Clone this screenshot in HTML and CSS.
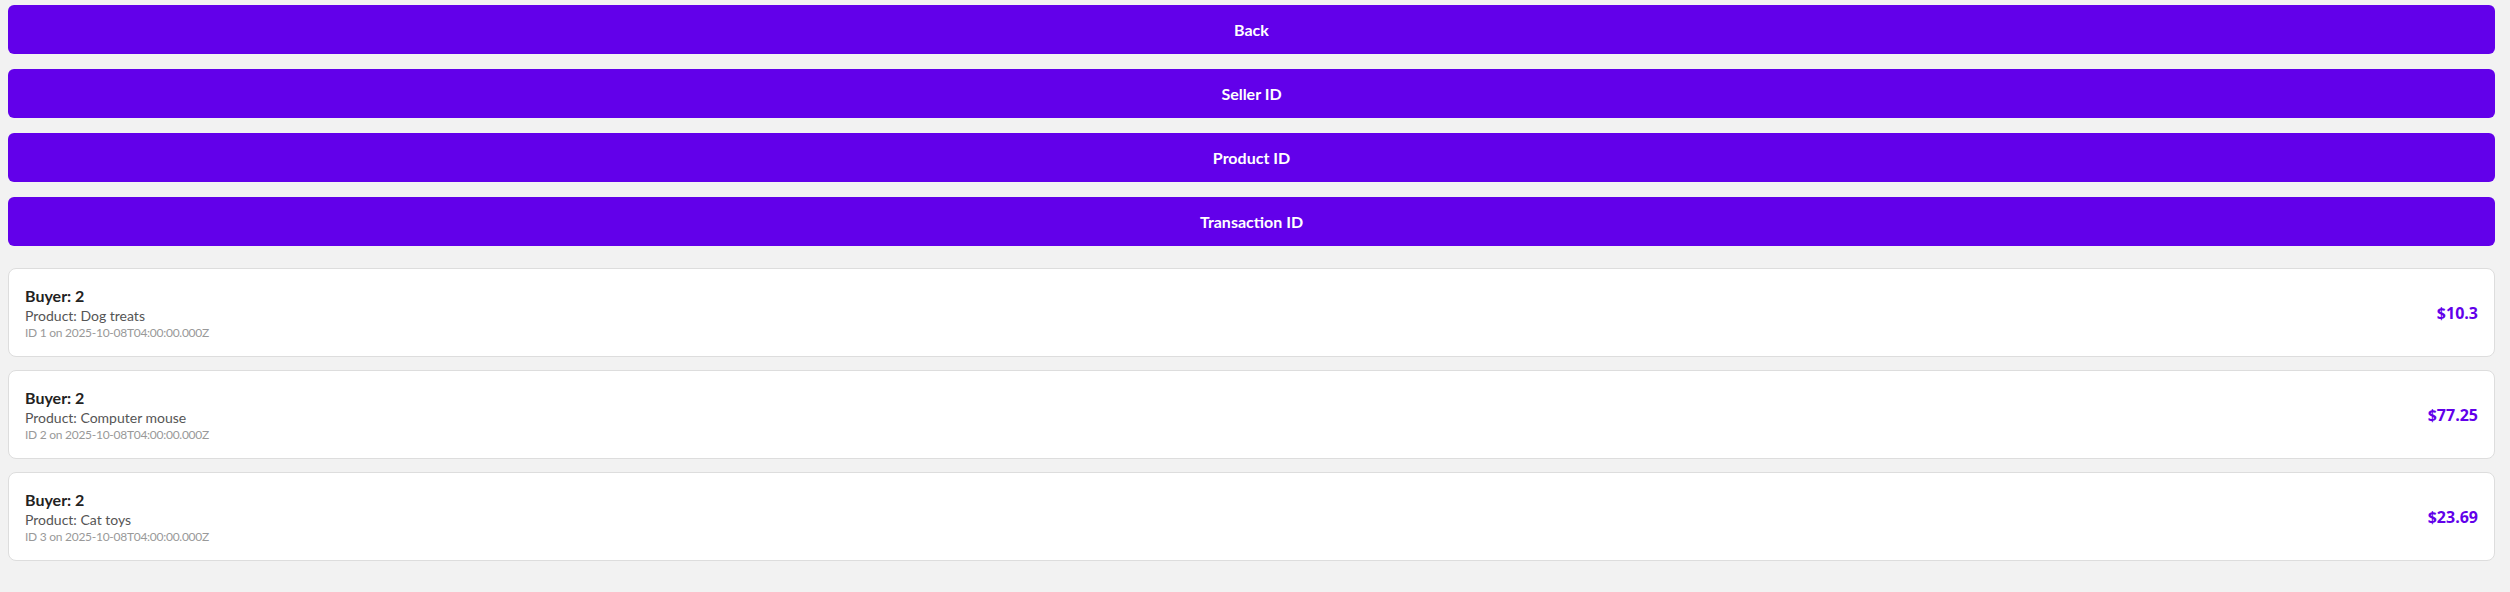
FILE: index.html
```html
<!DOCTYPE html>
<html>
<head>
<meta charset="utf-8">
<link rel="stylesheet" href="styles.css">
</head>
<body>
<div class="page">
  <div class="actions">
    <button class="btn">Back</button>
    <button class="btn">Seller ID</button>
    <button class="btn">Product ID</button>
    <button class="btn">Transaction ID</button>
  </div>
  <div class="list">
    <div class="card">
      <div class="info">
        <div class="buyer">Buyer: 2</div>
        <div class="product">Product: Dog treats</div>
        <div class="meta">ID 1 on 2025-10-08T04:00:00.000Z</div>
      </div>
      <div class="price">$10.3</div>
    </div>
    <div class="card">
      <div class="info">
        <div class="buyer">Buyer: 2</div>
        <div class="product">Product: Computer mouse</div>
        <div class="meta">ID 2 on 2025-10-08T04:00:00.000Z</div>
      </div>
      <div class="price">$77.25</div>
    </div>
    <div class="card">
      <div class="info">
        <div class="buyer">Buyer: 2</div>
        <div class="product">Product: Cat toys</div>
        <div class="meta">ID 3 on 2025-10-08T04:00:00.000Z</div>
      </div>
      <div class="price">$23.69</div>
    </div>
  </div>
</div>
</body>
</html>
```
FILE: styles.css
```css
html, body {
  margin: 0;
  padding: 0;
  background: #f2f2f2;
}
body {
  font-family: Lato, "Open Sans", sans-serif;
}
.page {
  padding: 5px 15px 20px 8px;
  display: flex;
  flex-direction: column;
  gap: 22px;
}
.actions {
  display: flex;
  flex-direction: column;
  gap: 15px;
}
.btn {
  height: 49px;
  border: none;
  border-radius: 6px;
  background: #6200ea;
  color: #ffffff;
  font-family: Lato, "Open Sans", sans-serif;
  font-weight: 700;
  font-size: 16px;
  padding: 0;
}
.list {
  display: flex;
  flex-direction: column;
  gap: 13px;
}
.card {
  background: #ffffff;
  border: 1px solid #dddddd;
  border-radius: 8px;
  padding: 16px;
  display: flex;
  align-items: center;
  justify-content: space-between;
}
.buyer {
  font-size: 16px;
  font-weight: 700;
  color: #222222;
  line-height: 21px;
}
.product {
  font-size: 14px;
  color: #555555;
  line-height: 19px;
}
.meta {
  font-size: 12px;
  color: #999999;
  line-height: 15px;
  letter-spacing: -0.27px;
}
.price {
  font-family: "Open Sans", sans-serif;
  font-weight: 700;
  font-size: 16px;
  color: #6200ea;
}
```
